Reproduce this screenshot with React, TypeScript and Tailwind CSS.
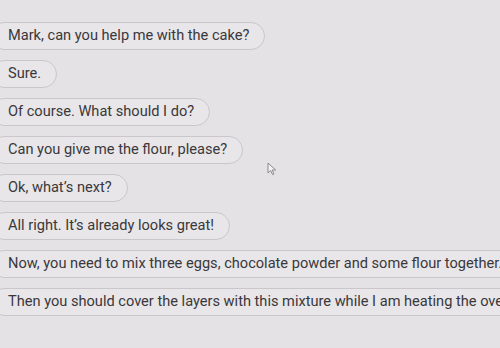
import React from "react";

const LINES: string[] = [
  "Mark, can you help me with the cake?",
  "Sure.",
  "Of course. What should I do?",
  "Can you give me the flour, please?",
  "Ok, what’s next?",
  "All right. It’s already looks great!",
  "Now, you need to mix three eggs, chocolate powder and some flour together.",
  "Then you should cover the layers with this mixture while I am heating the oven.",
];

// little outline pointer drawn where the mouse sits
const Cursor = () => (
  <svg className="absolute left-[267px] top-[162px]" width="10" height="14" viewBox="0 0 10 14">
    <path d="M1 1 L1 11 L3.6 8.6 L5.6 12.6 L7 11.9 L5.1 8 L8.6 8 Z" fill="#f4f3f4" stroke="#8a888b" strokeWidth="1" strokeLinejoin="round" />
  </svg>
);

function App() {
  return (
    <div className="relative w-[500px] h-[348px] overflow-hidden bg-[#e4e2e4] font-['Roboto',sans-serif]">
      <div className="flex flex-col items-start gap-[10px] pt-[22px] -ml-[10px]">
        {LINES.map((line) => (
          <div
            key={line}
            className="h-[28px] flex items-center whitespace-nowrap rounded-full border border-[#c9c7c9] bg-[#e8e6e8] pl-[17px] pr-[15px] text-[14.6px] text-[#3a383b]"
          >
            {line}
          </div>
        ))}
      </div>
      <Cursor />
    </div>
  );
}

export default App;
